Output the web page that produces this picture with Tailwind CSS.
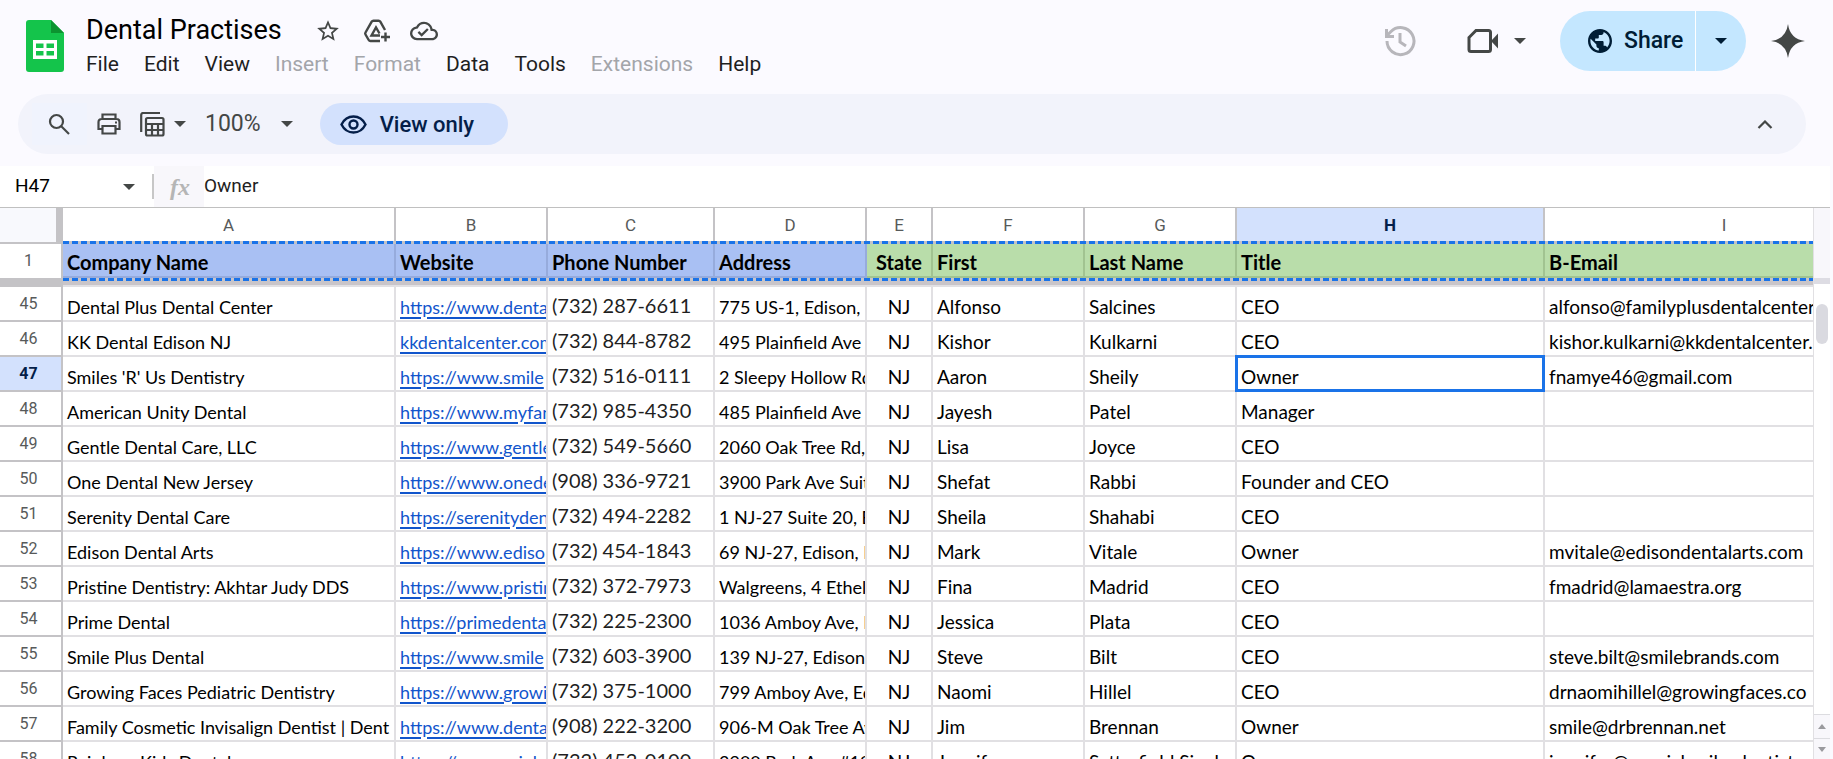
<!DOCTYPE html>
<html lang="en">
<head>
    <meta charset="UTF-8">
    <meta name="viewport" content="width=device-width, initial-scale=1.0">
    <title>Dental Practises</title>

    <script src="https://cdn.jsdelivr.net/npm/@tailwindcss/browser@4"></script>
</head>

<body class="h-screen flex flex-col overflow-hidden bg-[#fbfaff] font-['Roboto',sans-serif] text-[#1f1f1f]">

    <!-- Header -->
    <header class="flex h-[94px] shrink-0 justify-between pl-[26px] pr-6">
        <div class="flex gap-[18px]">
            <svg class="mt-5 h-[52px] w-[38px]" viewBox="0 0 38 52">
                <path d="M3 0h22l13 13v36a3 3 0 0 1-3 3H3a3 3 0 0 1-3-3V3a3 3 0 0 1 3-3z" fill="#14c44b"/>
                <path d="M25 0l13 13H25z" fill="#0c9430"/>
                <path d="M7 20h24v19H7zM10 23.500v4.500h7.500v-4.500zM20.500 23.500v4.500H28v-4.500zM10 31v4.500h7.500V31zM20.500 31v4.500H28V31z" fill="#fff" fill-rule="evenodd"/>
            </svg>
            <div class="pt-3">
                <div class="flex h-[37px] items-center text-[#444746]">
                    <h1 class="mr-[33px] pl-1 text-[27px] text-black">Dental Practises</h1>
                    <button class="mr-[22px]" aria-label="Star">
                        <svg class="size-[26px]" viewBox="0 0 24 24" fill="currentColor"><path d="M22 9.240l-7.190-.62L12 2 9.190 8.630 2 9.240l5.460 4.730L5.820 21 12 17.270 18.180 21l-1.630-7.030L22 9.240zM12 15.400l-3.760 2.270 1-4.280-3.320-2.880 4.380-.38L12 6.100l1.710 4.040 4.380.38-3.320 2.880 1 4.280L12 15.400z"/></svg>
                    </button>
                    <button class="mr-[19px]" aria-label="Add shortcut to Drive">
                        <svg class="h-6 w-[28px]" viewBox="0 0 28 24" fill="none" stroke="currentColor" stroke-width="2.400">
                            <path d="M17 22H7.500a2 2 0 0 1-1.800-1L2.500 15.500a2 2 0 0 1 0-2L8.700 2.700A2 2 0 0 1 10.500 1.700h5a2 2 0 0 1 1.800 1L22 11"/>
                            <path d="M17 16.500H8.500L13 8.500l3.500 6"/>
                            <path d="M22.500 13.500v9M18 18h9"/>
                        </svg>
                    </button>
                    <button aria-label="Document status">
                        <svg class="size-[28px]" viewBox="0 0 24 24" fill="currentColor"><path d="M19.350 10.040A7.490 7.490 0 0 0 12 4C9.110 4 6.600 5.640 5.350 8.040A5.994 5.994 0 0 0 0 14c0 3.310 2.690 6 6 6h13c2.760 0 5-2.240 5-5 0-2.640-2.050-4.780-4.650-4.960zM19 18H6c-2.210 0-4-1.790-4-4 0-2.050 1.530-3.760 3.560-3.970l1.070-.11.5-.95A5.469 5.469 0 0 1 12 6c2.620 0 4.880 1.860 5.390 4.430l.3 1.500 1.530.11A2.980 2.980 0 0 1 22 15c0 1.650-1.350 3-3 3zm-9-3.820l-2.090-2.090L6.500 13.500 10 17l6.010-6.010-1.410-1.410z"/></svg>
                    </button>
                </div>
                <nav class="flex h-8 items-center gap-[17px] text-[21px]">
                    <button class="px-1">File</button>
                    <button class="px-1">Edit</button>
                    <button class="px-1">View</button>
                    <button class="px-1 text-[#a3a5aa]" disabled>Insert</button>
                    <button class="px-1 text-[#a3a5aa]" disabled>Format</button>
                    <button class="px-1">Data</button>
                    <button class="px-1">Tools</button>
                    <button class="px-1 text-[#a3a5aa]" disabled>Extensions</button>
                    <button class="px-1">Help</button>
                </nav>
            </div>
        </div>

        <div class="flex h-[82px] items-center text-[#444746]">
            <button class="mr-[51px] text-[#b7b6bb]" aria-label="Version history">
                <svg class="size-8" viewBox="0 0 32 32" fill="none" stroke="currentColor" stroke-width="3">
                    <path d="M3 16a13.500 13.500 0 1 0 4-9.500L3 10.500"/>
                    <path d="M2.500 4v7.500H10M16 8v9l6 4"/>
                </svg>
            </button>
            <button class="mr-[34px] flex items-center gap-[15px]" aria-label="Join a call">
                <svg class="h-6 w-8" viewBox="0 0 32 24">
                    <path d="M9 1.500h12.500a2 2 0 0 1 2 2v17a2 2 0 0 1-2 2H4a2 2 0 0 1-2-2V8.500z" fill="none" stroke="currentColor" stroke-width="3"/>
                    <path d="M24 12l7-7.500v15z" fill="currentColor"/>
                </svg>
                <svg class="h-[6px] w-3" viewBox="0 0 12 6" fill="currentColor"><path d="M0 0h12L6 6z"/></svg>
            </button>
            <div class="flex h-[60px] overflow-hidden rounded-full bg-[#c4e7ff] text-[#001d35]">
                <button class="flex w-[136px] items-center gap-3 border-r border-white pl-7 text-[23px] font-medium">
                    <svg class="size-6 shrink-0" viewBox="2 2 20 20" fill="currentColor"><path d="M12 2C6.480 2 2 6.480 2 12s4.480 10 10 10 10-4.480 10-10S17.520 2 12 2zm-1 17.930c-3.950-.49-7-3.850-7-7.930 0-.62.08-1.210.21-1.790L9 15v1c0 1.100.9 2 2 2v1.930zm6.900-2.540c-.26-.81-1-1.390-1.900-1.390h-1v-3c0-.55-.45-1-1-1H8v-2h2c.55 0 1-.45 1-1V7h2c1.100 0 2-.9 2-2v-.41c2.930 1.190 5 4.060 5 7.410 0 2.080-.8 3.970-2.100 5.390z"/></svg>
                    Share
                </button>
                <button class="flex w-[50px] items-center justify-center" aria-label="Quick sharing actions">
                    <svg class="h-[6px] w-3" viewBox="0 0 12 6" fill="currentColor"><path d="M0 0h12L6 6z"/></svg>
                </button>
            </div>
            <button class="ml-[25px] mr-1" aria-label="Ask Gemini">
                <svg class="size-[34px]" viewBox="0 0 34 34" fill="currentColor"><path d="M17 0Q19 15 34 17Q19 19 17 34Q15 19 0 17Q15 15 17 0z M17 5Q20 14 29 17Q20 20 17 29Q14 20 5 17Q14 14 17 5z"/></svg>
            </button>
        </div>
    </header>

    <!-- Toolbar -->
    <div class="ml-[18px] mr-[27px] flex h-[60px] shrink-0 items-center rounded-full bg-[#f2f3fb] text-[#444746]">
        <button class="ml-[14px] flex h-[42px] w-[55px] items-center justify-center bg-[#f0f3fd]" aria-label="Search the menus">
            <svg class="size-[23px]" viewBox="0 0 23 23" fill="none" stroke="currentColor" stroke-width="2.200"><circle cx="8.500" cy="8.500" r="6.500"/><path d="M13 13l8 8"/></svg>
        </button>
        <button class="ml-[10px]" aria-label="Print">
            <svg class="h-[22px] w-6" viewBox="0 0 24 22" fill="none" stroke="currentColor" stroke-width="2.200"><path d="M5.500 6V1.500h13V6M5.500 16H1.500V9a3 3 0 0 1 3-3h15a3 3 0 0 1 3 3v7h-4"/><path d="M5.500 13h13v7.500h-13z"/><path d="M18 9.500h2"/></svg>
        </button>
        <button class="ml-[19px] flex items-center gap-[9px]" aria-label="Filter views">
            <svg class="size-[25px]" viewBox="0 0 25 25" fill="none" stroke="currentColor" stroke-width="2.200"><path d="M1.200 20V3a2 2 0 0 1 2-2H20"/><rect x="6" y="6" width="17.500" height="17.500" rx="1.500"/><path d="M6 12h17.500M6 18h17.500M12 12v11M18 12v11"/></svg>
            <svg class="h-[6px] w-3" viewBox="0 0 12 6" fill="currentColor"><path d="M0 0h12L6 6z"/></svg>
        </button>
        <button class="ml-[19px] flex items-center gap-[20px] text-[23px]" aria-label="Zoom">
            100%
            <svg class="h-[6px] w-3" viewBox="0 0 12 6" fill="currentColor"><path d="M0 0h12L6 6z"/></svg>
        </button>
        <button class="ml-[27px] flex h-[42px] w-[188px] items-center gap-[13px] rounded-full bg-[#d3e1fd] pl-5 text-[22px] font-medium text-[#041e49]">
            <svg class="h-[19px] w-[27px]" viewBox="0 0 27 19" fill="none" stroke="currentColor" stroke-width="2.400"><path d="M1.500 9.500C4 4.500 8.500 1.500 13.500 1.500s9.500 3 12 8c-2.500 5-7 8-12 8s-9.500-3-12-8z"/><circle cx="13.500" cy="9.500" r="4"/></svg>
            View only
        </button>
        <button class="ml-auto mr-[33px]" aria-label="Hide the menus">
            <svg class="h-[9px] w-4" viewBox="0 0 16 9" fill="none" stroke="currentColor" stroke-width="2.200"><path d="M1.500 8L8 1.500 14.500 8"/></svg>
        </button>
    </div>

    <!-- Formula bar -->
    <div class="mr-[3px] mt-3 flex h-[42px] shrink-0 items-center border-b border-[#c0c0c0] bg-white text-[19px]">
        <input class="w-[123px] pl-[15px] text-black outline-none" aria-label="Name box" value="H47">
        <button class="mr-[17px] text-[#444746]" aria-label="Named ranges">
            <svg class="h-[6px] w-3" viewBox="0 0 12 6" fill="currentColor"><path d="M0 0h12L6 6z"/></svg>
        </button>
        <span class="h-[25px] w-[2px] bg-[#c7c7c7]"></span>
        <label for="formula" class="flex h-full w-[50px] items-center justify-center bg-[#f8f7fb] pl-[2px] font-['Liberation_Serif',serif] text-[24px] font-bold italic leading-6 text-[#b5b5b5]">fx</label>
        <input id="formula" class="grow outline-none" value="Owner">
    </div>

    <!-- Sheet -->
    <main class="mr-[3px] flex min-h-0 grow bg-white">
        <div class="relative min-w-0 grow overflow-hidden">
            <table class="w-[1905px] table-fixed border-separate border-spacing-0 text-left font-['Lato',sans-serif] text-[19px] leading-6 text-black">
                <colgroup>
                    <col class="w-[63px]">
                    <col class="w-[333px]">
                    <col class="w-[152px]">
                    <col class="w-[167px]">
                    <col class="w-[152px]">
                    <col class="w-[66px]">
                    <col class="w-[152px]">
                    <col class="w-[152px]">
                    <col class="w-[308px]">
                    <col class="w-[360px]">
                </colgroup>
                <thead>
                    <tr id="letters" class="h-9 font-['Roboto',sans-serif] text-[17px] text-[#575a5a]">
                        <td class="border-b-2 border-r-[7px] border-[#c4c3c6] bg-[#f8f9fd]"></td>
                    </tr>
                    <tr class="h-[34px] text-[20px] font-bold">
                        <th class="border-r-2 border-[#c4c3c6] pr-1 text-center font-['Roboto',sans-serif] text-[16px] font-normal text-[#575a5a]">1</th>
                        <th class="border-b-2 border-r-2 border-[#96abdc] bg-[#a9c0f3] pl-1 pt-1">Company Name</th>
                        <th class="border-b-2 border-r-2 border-[#96abdc] bg-[#a9c0f3] pl-1 pt-1">Website</th>
                        <th class="border-b-2 border-r-2 border-[#96abdc] bg-[#a9c0f3] pl-1 pt-1">Phone Number</th>
                        <th class="border-b-2 border-r-2 border-[#96abdc] bg-[#a9c0f3] pl-1 pt-1">Address</th>
                        <th class="border-b-2 border-r-2 border-[#a1c391] bg-[#b9ddaa] pt-1 text-center">State</th>
                        <th class="border-b-2 border-r-2 border-[#a1c391] bg-[#b9ddaa] pl-1 pt-1">First</th>
                        <th class="border-b-2 border-r-2 border-[#a1c391] bg-[#b9ddaa] pl-1 pt-1">Last Name</th>
                        <th class="border-b-2 border-r-2 border-[#a1c391] bg-[#b9ddaa] pl-1 pt-1">Title</th>
                        <th class="border-b-2 border-r-2 border-[#a1c391] bg-[#b9ddaa] pl-1 pt-1">B-Email</th>
                    </tr>
                    <tr class="h-[9px]">
                        <td class="bg-[#c4c3c6]"></td>
                        <td colspan="9" class="border-b-2 border-[#e1e0e3] bg-[#c9c5c9]"></td>
                    </tr>
                </thead>
                <tbody id="rows"></tbody>
            </table>

            <!-- Copied range outline -->
            <div class="absolute left-[63px] right-0 top-[33px] h-[3px] bg-[#c4c3c6] bg-[repeating-linear-gradient(90deg,#1a73e8_0_6px,transparent_6px_9px)]"></div>
            <div class="absolute left-[63px] right-0 top-[70px] h-[3px] bg-[repeating-linear-gradient(90deg,#1a73e8_0_6px,transparent_6px_9px)]"></div>
        </div>

        <!-- Scrollbar -->
        <div class="flex w-[18px] flex-col border-l border-[#e1e0e3]">
            <div class="h-[70px] bg-[#f8f7fb]"></div>
            <div class="h-[6px] bg-[#dddce3]"></div>
            <div class="mx-[2px] mt-[20px] h-[40px] rounded-full bg-[#dadae0]"></div>
            <button class="mt-auto flex h-6 items-center justify-center border-t border-[#dcdce0] bg-[#f8f7fb] text-[#9a9a9e]" aria-label="Scroll up">
                <svg class="h-[5px] w-2" viewBox="0 0 8 5" fill="currentColor"><path d="M0 5h8L4 0z"/></svg>
            </button>
            <button class="flex h-[21px] items-center justify-center border-t border-[#dcdce0] bg-[#f8f7fb] text-[#9a9a9e]" aria-label="Scroll down">
                <svg class="h-[5px] w-2" viewBox="0 0 8 5" fill="currentColor"><path d="M0 0h8L4 5z"/></svg>
            </button>
        </div>
    </main>

    <script>
        const letters = ['A', 'B', 'C', 'D', 'E', 'F', 'G', 'H', 'I'];

        const rows = [
            [45, 'Dental Plus Dental Center', 'https://www.denta', '(732) 287-6611', '775 US-1, Edison,', 'NJ', 'Alfonso', 'Salcines', 'CEO', 'alfonso@familyplusdentalcenter'],
            [46, 'KK Dental Edison NJ', 'kkdentalcenter.com', '(732) 844-8782', '495 Plainfield Ave', 'NJ', 'Kishor', 'Kulkarni', 'CEO', 'kishor.kulkarni@kkdentalcenter.'],
            [47, "Smiles 'R' Us Dentistry", 'https://www.smile', '(732) 516-0111', '2 Sleepy Hollow Rd', 'NJ', 'Aaron', 'Sheily', 'Owner', 'fnamye46@gmail.com'],
            [48, 'American Unity Dental', 'https://www.myfan', '(732) 985-4350', '485 Plainfield Ave', 'NJ', 'Jayesh', 'Patel', 'Manager', ''],
            [49, 'Gentle Dental Care, LLC', 'https://www.gentle', '(732) 549-5660', '2060 Oak Tree Rd,', 'NJ', 'Lisa', 'Joyce', 'CEO', ''],
            [50, 'One Dental New Jersey', 'https://www.onede', '(908) 336-9721', '3900 Park Ave Suit', 'NJ', 'Shefat', 'Rabbi', 'Founder and CEO', ''],
            [51, 'Serenity Dental Care', 'https://serenityden', '(732) 494-2282', '1 NJ-27 Suite 20, E', 'NJ', 'Sheila', 'Shahabi', 'CEO', ''],
            [52, 'Edison Dental Arts', 'https://www.ediso', '(732) 454-1843', '69 NJ-27, Edison, N', 'NJ', 'Mark', 'Vitale', 'Owner', 'mvitale@edisondentalarts.com'],
            [53, 'Pristine Dentistry: Akhtar Judy DDS', 'https://www.pristin', '(732) 372-7973', 'Walgreens, 4 Ethel', 'NJ', 'Fina', 'Madrid', 'CEO', 'fmadrid@lamaestra.org'],
            [54, 'Prime Dental', 'https://primedental', '(732) 225-2300', '1036 Amboy Ave, E', 'NJ', 'Jessica', 'Plata', 'CEO', ''],
            [55, 'Smile Plus Dental', 'https://www.smile', '(732) 603-3900', '139 NJ-27, Edison,', 'NJ', 'Steve', 'Bilt', 'CEO', 'steve.bilt@smilebrands.com'],
            [56, 'Growing Faces Pediatric Dentistry', 'https://www.growi', '(732) 375-1000', '799 Amboy Ave, Ed', 'NJ', 'Naomi', 'Hillel', 'CEO', 'drnaomihillel@growingfaces.co'],
            [57, 'Family Cosmetic Invisalign Dentist | Dent', 'https://www.denta', '(908) 222-3200', '906-M Oak Tree Av', 'NJ', 'Jim', 'Brennan', 'Owner', 'smile@drbrennan.net'],
            [58, 'Rainbow Kids Dental', 'https://www.rainbo', '(732) 452-0100', '3900 Park Ave #10', 'NJ', 'Jennifer', 'Satterfield Singh', 'Owner', 'jennifer@specialsmilesdentist']
        ];

        // Column letters, H is the active one
        letters.forEach(letter => {
            const look = letter === 'H' ? 'bg-[#d3e1fd] font-bold text-[#041e49]' : 'bg-white font-normal';
            document.getElementById('letters').innerHTML += `<th class="border-b-2 border-r-2 border-[#c4c3c6] text-center ${look}">${letter}</th>`;
        });

        // Cell looks by column
        const looks = {
            1: 'pt-[6px] text-[18px]',
            2: 'pt-[6px] text-[18px]',
            3: 'pt-[2px] text-[20px] text-[#1f1f1f]',
            4: 'pt-[6px] text-[18px]',
            5: 'pt-[6px] pr-1 text-center'
        };

        rows.forEach(row => {
            const active = row[0] === 47;
            let html = `<th class="border-b-2 border-r-2 border-[#c4c3c6] pr-1 text-center font-['Roboto',sans-serif] text-[16px] ${active ? 'bg-[#d3e1fd] font-bold text-[#041e49]' : 'font-normal text-[#575a5a]'}">${row[0]}</th>`;
            for (let i = 1; i < row.length; i++) {
                const selected = active && i === 8;
                const look = looks[i] || 'pt-[6px]';
                let text = row[i];
                if (i === 2) {
                    text = `<a href="#" class="text-[#1155cc] underline decoration-2 underline-offset-3">${text}</a>`;
                }
                if (selected) {
                    text += '<div class="absolute -inset-[2px] border-[3px] border-[#1a73e8]"></div>';
                }
                html += `<td class="whitespace-nowrap border-b-2 border-r-2 border-[#e1e0e3] pl-1 ${look} ${selected ? 'relative' : 'overflow-hidden'}">${text}</td>`;
            }
            document.getElementById('rows').innerHTML += `<tr class="h-[35px]">${html}</tr>`;
        });
    </script>
</body>
</html>
